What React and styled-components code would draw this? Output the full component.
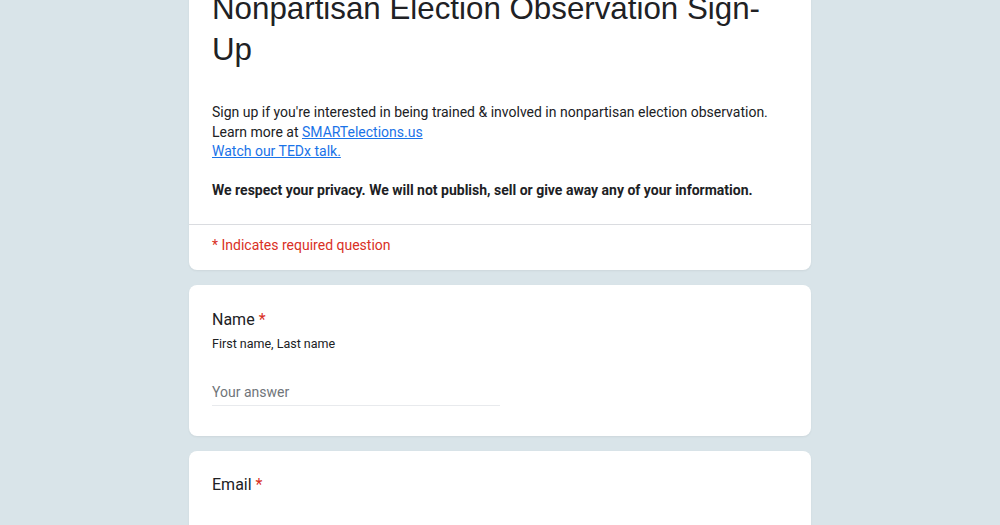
import React from 'react'
import styled, { createGlobalStyle } from 'styled-components'

const GlobalStyle = createGlobalStyle`
  html, body {
    margin: 0;
    padding: 0;
    background: #d9e4e9;
    overflow: hidden;
  }
  body {
    font-family: Roboto, "Liberation Sans", Arial, sans-serif;
    color: #202124;
  }
`

const Page = styled.div`
  width: 622px;
  margin: -36px auto 0;
  display: flex;
  flex-direction: column;
  gap: 15px;
`

const Card = styled.div`
  background: #fff;
  border-radius: 8px;
  box-shadow: 0 1px 2px rgba(60, 64, 67, 0.08);
  padding: ${(p) => p.padding || '23px 23px 30px'};
`

const HeaderCard = styled.div`
  background: #fff;
  border-radius: 8px;
  box-shadow: 0 1px 2px rgba(60, 64, 67, 0.08);
  display: flex;
  flex-direction: column;
`

const HeaderTop = styled.div`
  padding: 24px 23px 23px;
  border-bottom: 1px solid #dadce0;
`

const Title = styled.h1`
  margin: 0;
  font-family: "Liberation Sans", Arial, sans-serif;
  font-weight: 400;
  font-size: 31.3px;
  line-height: 41px;
  color: #202124;
`

const Description = styled.div`
  margin-top: 33px;
  font-size: 14px;
  line-height: 19.5px;
  color: #202124;

  a {
    color: #1a73e8;
    text-decoration: underline;
  }

  b {
    font-weight: 700;
  }
`

const Required = styled.div`
  padding: 10px 23px 15px;
  font-size: 14px;
  line-height: 20px;
  color: #d93025;
`

const Question = styled.div`
  font-size: 16px;
  line-height: 24px;
  color: #202124;

  span {
    color: #d93025;
    margin-left: 4px;
  }
`

const Help = styled.div`
  margin-top: 3px;
  font-size: 12.5px;
  line-height: 18px;
  color: #202124;
`

const Answer = styled.div`
  margin-top: 29px;
  width: 50%;
  padding-bottom: 3px;
  border-bottom: 1px solid #e8eaed;
  font-size: 14px;
  line-height: 20px;
  color: #70757a;
`

function App() {
  return (
    <>
      <GlobalStyle />
      <Page>
        <HeaderCard>
          <HeaderTop>
            <Title>Nonpartisan Election Observation Sign-Up</Title>
            <Description>
              Sign up if you're interested in being trained &amp; involved in nonpartisan election observation.
              <br />
              Learn more at <a href="#">SMARTelections.us</a>
              <br />
              <a href="#">Watch our TEDx talk.</a>
              <br />
              <br />
              <b>We respect your privacy. We will not publish, sell or give away any of your information.</b>
            </Description>
          </HeaderTop>
          <Required>* Indicates required question</Required>
        </HeaderCard>

        <Card>
          <Question>
            Name<span>*</span>
          </Question>
          <Help>First name, Last name</Help>
          <Answer>Your answer</Answer>
        </Card>

        <Card padding="22px 23px 60px">
          <Question>
            Email<span>*</span>
          </Question>
        </Card>
      </Page>
    </>
  )
}

export default App
